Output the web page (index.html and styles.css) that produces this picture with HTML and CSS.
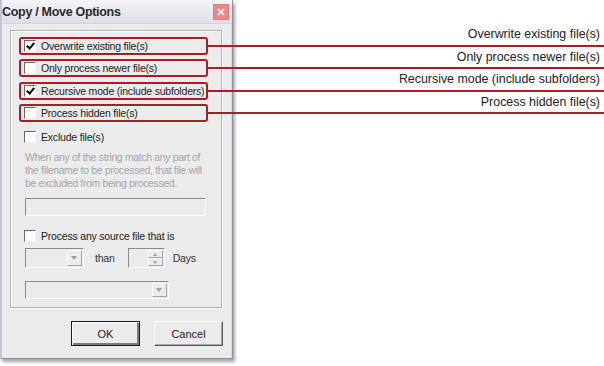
FILE: index.html
```html
<!DOCTYPE html>
<html lang="en">
<head>
    <meta charset="UTF-8">
    <title>Copy / Move Options</title>
    <link rel="stylesheet" href="styles.css">
</head>
<body>
<div class="stage">
    <div class="dialog">
        <div class="titlebar">
            <span class="title">Copy / Move Options</span>
            <span class="close-btn">
                <svg width="8" height="8" viewBox="0 0 8 8"><path d="M1 1L7 7M7 1L1 7" stroke="#fff" stroke-width="1.6"/></svg>
            </span>
        </div>
        <div class="dialog-body">
            <div class="group">
                <div class="check-row marked">
                    <span class="box checked"></span><span>Overwrite existing file(s)</span>
                </div>
                <div class="check-row marked">
                    <span class="box"></span><span>Only process newer file(s)</span>
                </div>
                <div class="check-row marked">
                    <span class="box checked"></span><span>Recursive mode (include subfolders)</span>
                </div>
                <div class="check-row marked">
                    <span class="box"></span><span>Process hidden file(s)</span>
                </div>
                <div class="check-row">
                    <span class="box"></span><span>Exclude file(s)</span>
                </div>
                <p class="hint">
                    When any of the string match any part of<br>
                    the filename to be processed, that file will<br>
                    be excluded from being processed.
                </p>
                <div class="text-field"></div>
                <div class="check-row after-field">
                    <span class="box"></span><span>Process any source file that is</span>
                </div>
                <div class="age-row">
                    <div class="combo small"><span class="arrow"></span></div>
                    <span class="label">than</span>
                    <div class="spin"><span class="spin-btns"><i class="up"></i><i class="down"></i></span></div>
                    <span class="label">Days</span>
                </div>
                <div class="combo wide"><span class="arrow"></span></div>
            </div>
            <div class="buttons">
                <button class="btn default">OK</button>
                <button class="btn">Cancel</button>
            </div>
        </div>
    </div>
    <div class="callouts">
        <div class="callout">Overwrite existing file(s)</div>
        <div class="callout short">Only process newer file(s)</div>
        <div class="callout">Recursive mode (include subfolders)</div>
        <div class="callout short">Process hidden file(s)</div>
    </div>
</div>
</body>
</html>
```

FILE: styles.css
```css
html, body {
    margin: 0;
    background: #fff;
}
body {
    font-family: "Liberation Sans", Arial, sans-serif;
    font-size: 10.5px;
    letter-spacing: -0.2px;
    color: #222;
}
.stage {
    display: flex;
    width: 604px;
    height: 366px;
    overflow: hidden;
}
.dialog {
    width: 233px;
    height: 359px;
    box-sizing: border-box;
    flex: none;
    background: #ebebeb;
    border: 1px solid #8e8e9c;
    border-left: 2px solid #c4c4d4;
    border-top: none;
    box-shadow: 2px 3px 3px rgba(0, 0, 0, 0.35);
    display: flex;
    flex-direction: column;
}
.titlebar {
    height: 23px;
    flex: none;
    display: flex;
    align-items: center;
    justify-content: space-between;
    padding: 0 3px 0 0;
    background: linear-gradient(#f4f4f8, #dedee8);
    border-bottom: 1px solid #d4d4de;
}
.title {
    font-size: 12.5px;
    font-weight: bold;
    letter-spacing: -0.3px;
    color: #2a2a2a;
}
.close-btn {
    width: 14px;
    height: 14px;
    background: #ea8a84;
    border: 1px solid #e27c76;
    display: flex;
    align-items: center;
    justify-content: center;
}
.dialog-body {
    flex: 1;
    padding: 6px 0 0 8px;
    border-right: 1px solid #d8d8d8;
}
.group {
    width: 212px;
    height: 278px;
    box-sizing: border-box;
    border: 1px solid #b4b4b4;
    box-shadow: inset 1px 1px 0 #fff, 1px 1px 0 #fff;
    padding: 6px 0 0 8px;
    display: flex;
    flex-direction: column;
}
.check-row {
    height: 22px;
    flex: none;
    display: flex;
    align-items: center;
    gap: 5px;
    padding-left: 5px;
    white-space: nowrap;
}
.check-row.marked {
    width: 189px;
    height: 18px;
    box-sizing: border-box;
    margin-bottom: 4px;
    padding-left: 3px;
    border: 2px solid #a61e28;
    border-radius: 3px;
}
.check-row.marked:nth-child(3) {
    margin-top: 1px;
}
.check-row.after-field {
    margin-top: 9px;
}
.box {
    width: 12px;
    height: 12px;
    box-sizing: border-box;
    flex: none;
    background: #fff;
    border-top: 1px solid #6a6a6a;
    border-left: 1px solid #6a6a6a;
    border-right: 1px solid #f4f4f4;
    border-bottom: 1px solid #f4f4f4;
    position: relative;
}
.box.checked::after {
    content: "";
    position: absolute;
    left: 3px;
    top: 0;
    width: 3px;
    height: 6px;
    border: solid #000;
    border-width: 0 2px 2px 0;
    transform: rotate(40deg);
}
.hint {
    margin: 3px 0 0 6px;
    color: #a6a6a6;
    line-height: 13px;
    letter-spacing: -0.35px;
    white-space: nowrap;
}
.text-field {
    margin: 8px 0 0 6px;
    height: 18px;
    width: 181px;
    box-sizing: border-box;
    border-top: 1px solid #8a8a8a;
    border-left: 1px solid #8a8a8a;
    border-right: 1px solid #fff;
    border-bottom: 1px solid #fff;
}
.age-row {
    margin: 1px 0 0 6px;
    display: flex;
    align-items: center;
}
.label {
    color: #333;
}
.age-row .label:first-of-type {
    margin: 0 13px 0 11px;
}
.age-row .label:last-of-type {
    margin-left: 8px;
}
.combo {
    height: 20px;
    box-sizing: border-box;
    border-top: 1px solid #8a8a8a;
    border-left: 1px solid #8a8a8a;
    border-right: 1px solid #fff;
    border-bottom: 1px solid #fff;
    display: flex;
    justify-content: flex-end;
    padding: 1px;
}
.combo.small {
    width: 59px;
}
.combo.wide {
    width: 144px;
    height: 18px;
    margin: 13px 0 0 6px;
}
.arrow {
    width: 15px;
    box-sizing: border-box;
    border-left: 1px solid #fff;
    border-top: 1px solid #fff;
    border-right: 1px solid #a4a4a4;
    border-bottom: 1px solid #a4a4a4;
    position: relative;
}
.arrow::after {
    content: "";
    position: absolute;
    left: 3px;
    top: 50%;
    margin-top: -2px;
    border: 3px solid transparent;
    border-top: 4px solid #a0a0a0;
    border-bottom: none;
}
.spin {
    width: 37px;
    height: 20px;
    box-sizing: border-box;
    border-top: 1px solid #8a8a8a;
    border-left: 1px solid #8a8a8a;
    border-right: 1px solid #fff;
    border-bottom: 1px solid #fff;
    display: flex;
    justify-content: flex-end;
    padding: 1px;
}
.spin-btns {
    width: 15px;
    display: flex;
    flex-direction: column;
}
.spin-btns i {
    flex: 1;
    position: relative;
    border: 1px solid #a4a4a4;
    border-top-color: #fff;
    border-left-color: #fff;
}
.spin-btns i::after {
    content: "";
    position: absolute;
    left: 4px;
    top: 2px;
    border: 2px solid transparent;
}
.spin-btns .up::after {
    border-bottom: 3px solid #a0a0a0;
    border-top: none;
}
.spin-btns .down::after {
    border-top: 3px solid #a0a0a0;
    border-bottom: none;
}
.buttons {
    display: flex;
    gap: 14px;
    padding: 13px 0 0 61px;
}
.btn {
    width: 69px;
    height: 25px;
    box-sizing: border-box;
    background: #ebebeb;
    border: 1px solid;
    border-color: #fff #5a5a5a #5a5a5a #fff;
    box-shadow: inset -1px -1px 0 #a8a8a8;
    font-family: "Liberation Sans", Arial, sans-serif;
    font-size: 11px;
    color: #222;
    padding: 0;
}
.btn.default {
    border-color: #1a1a1a;
    box-shadow: inset 1px 1px 0 #fff, inset -2px -2px 0 #7a7a7a;
}
.callouts {
    flex: 1;
    padding-top: 24px;
    margin-left: -25px;
    display: flex;
    flex-direction: column;
}
.callout {
    height: 23px;
    box-sizing: border-box;
    border-bottom: 2px solid #a61e28;
    text-align: right;
    padding-right: 4px;
    font-size: 12.4px;
    letter-spacing: 0;
    line-height: 20px;
    color: #222;
}
.callout.short {
    height: 22px;
}
```
